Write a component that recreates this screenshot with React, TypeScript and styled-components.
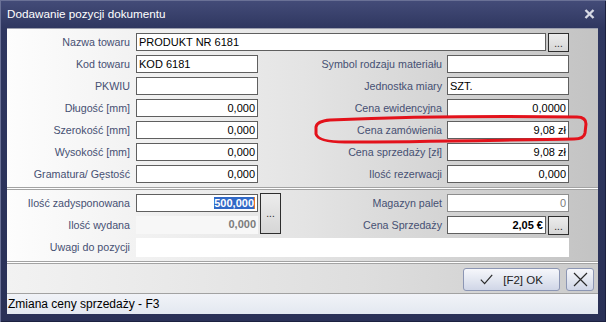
import React from "react";
import styled, { createGlobalStyle } from "styled-components";

const GlobalStyle = createGlobalStyle`
  body {
    margin: 0;
  }
  * {
    box-sizing: border-box;
  }
`;

const Window = styled.div`
  position: relative;
  width: 606px;
  height: 322px;
  display: flex;
  flex-direction: column;
  padding: 0 8px 8px 7px;
  background: linear-gradient(180deg, #444c79 0px, #2f3760 28px, #2a3157 100%);
  box-shadow: inset 1px 1px 0 #6a7196, inset -1px -1px 0 #1c2140;
  font-family: "Liberation Sans", Arial, sans-serif;
`;

const TitleBar = styled.div`
  height: 28px;
  display: flex;
  align-items: center;
  justify-content: space-between;
  padding: 0 3px 1px 0;
  color: #ffffff;
  font-size: 11.7px;
`;

const Panel = styled.div`
  flex: 1;
  display: flex;
  flex-direction: column;
  border-top: 1px solid #9c9fae;
  background: linear-gradient(90deg, #fdfdfd 0%, #e4e4e4 50%, #c3c3c3 100%);
`;

const TopGrid = styled.div`
  display: grid;
  grid-template-columns: 129px 122px 189px 122px;
  grid-auto-rows: 18px;
  row-gap: 4px;
  padding-top: 4px;
`;

const BottomGrid = styled.div`
  display: grid;
  grid-template-columns: 129px 122px 24px 165px 122px;
  grid-template-rows: 18px 18px 19px;
  row-gap: 4px;
`;

const Label = styled.div<{ $pr: number; $col?: string }>`
  grid-column: ${(p) => p.$col || "auto"};
  text-align: right;
  padding-right: ${(p) => p.$pr}px;
  color: #465073;
  font-size: 10.7px;
  line-height: 18px;
  white-space: nowrap;
`;

const Field = styled.div<{
  $right?: boolean;
  $bold?: boolean;
  $flat?: boolean;
  $muted?: boolean;
  $col?: string;
}>`
  grid-column: ${(p) => p.$col || "auto"};
  flex: 1;
  height: 100%;
  border: ${(p) => (p.$flat ? "none" : p.$muted ? "1px solid #8e8e8e" : "1px solid #5f5f5f")};
  background: ${(p) => (p.$flat && p.$muted ? "#f7f7f7" : "#ffffff")};
  color: ${(p) => (p.$muted ? "#7c7c7c" : "#000000")};
  font-size: 11px;
  font-weight: ${(p) => (p.$bold ? "bold" : "normal")};
  line-height: 16px;
  padding: 0 2px;
  text-align: ${(p) => (p.$right ? "right" : "left")};
  white-space: nowrap;
  overflow: hidden;
`;

const FieldRow = styled.div<{ $col: string }>`
  grid-column: ${(p) => p.$col};
  display: flex;
  gap: 2px;
`;

const DotsButton = styled.div<{ $tall?: boolean }>`
  width: 21px;
  height: ${(p) => (p.$tall ? "41px" : "19px")};
  margin-top: ${(p) => (p.$tall ? "-1px" : "0")};
  border: 1px solid #2e2e2e;
  background: linear-gradient(180deg, #ececec, #d6d6d6);
  display: flex;
  align-items: ${(p) => (p.$tall ? "center" : "flex-end")};
  justify-content: center;
  padding-bottom: ${(p) => (p.$tall ? "0" : "3px")};
  font-size: 10px;
  line-height: 8px;
  color: #222;
`;

const TallCell = styled.div`
  grid-column: 3;
  grid-row: 1 / 3;
  padding-left: 2px;
`;

const Selected = styled.span`
  background: #3169c6;
  color: #ffffff;
  border-right: 1px solid #e8781e;
`;

const Separator = styled.div<{ $mb: number }>`
  height: 3px;
  margin: 4px 0 ${(p) => p.$mb}px;
  border-top: 1px solid #a3a3a3;
  border-bottom: 1px solid #a3a3a3;
  background: #ffffff;
`;

const ButtonBar = styled.div`
  height: 30px;
  display: flex;
  justify-content: flex-end;
  gap: 6px;
  padding: 4px 4px 0;
  border-bottom: 1px solid #a2a2a2;
  background: linear-gradient(90deg, #f2f2f2 0%, #dedede 60%, #cbcbcb 100%);
`;

const WinButton = styled.div<{ $w: number }>`
  width: ${(p) => p.$w}px;
  height: 23px;
  display: flex;
  align-items: center;
  justify-content: center;
  gap: 10px;
  border: 1px solid #8c96b4;
  border-radius: 3px;
  background: linear-gradient(180deg, #f6f7fb 0%, #e3e7f1 50%, #d0d6e7 100%);
  color: #222;
  font-size: 11.5px;
`;

const StatusBar = styled.div`
  height: 20px;
  padding-left: 1px;
  display: flex;
  align-items: center;
  background: linear-gradient(180deg, #f1f3f8, #e3e8f0);
  color: #000;
  font-size: 12px;
`;

const Annotation = styled.svg`
  position: absolute;
  left: 0;
  top: 0;
  pointer-events: none;
`;

export default function App() {
  return (
    <>
      <GlobalStyle />
      <Window>
        <TitleBar>
          <span>Dodawanie pozycji dokumentu</span>
          <svg width="11" height="10" viewBox="0 0 11 10">
            <path d="M1.5 1 L9.5 9 M9.5 1 L1.5 9" stroke="#d6d9e4" strokeWidth="2.4" />
          </svg>
        </TitleBar>
        <Panel>
          <TopGrid>
            <Label $pr={6}>Nazwa towaru</Label>
            <FieldRow $col="2 / 5">
              <Field>PRODUKT NR 6181</Field>
              <DotsButton>...</DotsButton>
            </FieldRow>

            <Label $pr={6}>Kod towaru</Label>
            <Field>KOD 6181</Field>
            <Label $pr={5}>Symbol rodzaju materiału</Label>
            <Field />

            <Label $pr={6}>PKWIU</Label>
            <Field />
            <Label $pr={5}>Jednostka miary</Label>
            <Field>SZT.</Field>

            <Label $pr={6}>Długość [mm]</Label>
            <Field $right>0,000</Field>
            <Label $pr={5}>Cena ewidencyjna</Label>
            <Field $right>0,0000</Field>

            <Label $pr={6}>Szerokość [mm]</Label>
            <Field $right>0,000</Field>
            <Label $pr={5}>Cena zamówienia</Label>
            <Field $right>9,08 zł</Field>

            <Label $pr={6}>Wysokość [mm]</Label>
            <Field $right>0,000</Field>
            <Label $pr={5}>Cena sprzedaży [zł]</Label>
            <Field $right>9,08 zł</Field>

            <Label $pr={6}>Gramatura/ Gęstość</Label>
            <Field $right>0,000</Field>
            <Label $pr={5}>Ilość rezerwacji</Label>
            <Field $right>0,000</Field>
          </TopGrid>

          <Separator $mb={4} />

          <BottomGrid>
            <Label $pr={6}>Ilość zadysponowana</Label>
            <Field $right $bold>
              <Selected>500,000</Selected>
            </Field>
            <TallCell>
              <DotsButton $tall>...</DotsButton>
            </TallCell>
            <Label $pr={5}>Magazyn palet</Label>
            <Field $right $muted>0</Field>

            <Label $pr={6} $col="1">Ilość wydana</Label>
            <Field $right $bold $flat $muted>0,000</Field>
            <Label $pr={5} $col="4">Cena Sprzedaży</Label>
            <FieldRow $col="5">
              <Field $right $bold>2,05 €</Field>
              <DotsButton>...</DotsButton>
            </FieldRow>

            <Label $pr={6}>Uwagi do pozycji</Label>
            <Field $flat $col="2 / 6" />
          </BottomGrid>

          <Separator $mb={0} />

          <ButtonBar>
            <WinButton $w={97}>
              <svg width="13" height="11" viewBox="0 0 13 11">
                <path d="M0.8 5.6 L4.6 9.6 L12.2 0.8" fill="none" stroke="#2a2a2a" strokeWidth="1.2" />
              </svg>
              <span>[F2] OK</span>
            </WinButton>
            <WinButton $w={28}>
              <svg width="15" height="15" viewBox="0 0 15 15">
                <path d="M1 1 L14 14 M14 1 L1 14" stroke="#2a2a2a" strokeWidth="1.2" />
              </svg>
            </WinButton>
          </ButtonBar>

          <StatusBar>Zmiana ceny sprzedaży - F3</StatusBar>
        </Panel>

        <Annotation width="606" height="322" viewBox="0 0 606 322">
          <path
            d="M330 120 C 400 117, 500 116, 577 117 Q 586 117 586 124 L 585 133 Q 584 139 574 139 C 500 140, 420 142, 345 142 Q 318 142 316 134 L 316 127 Q 317 121 330 120 Z"
            fill="none"
            stroke="#e3121b"
            strokeWidth="3"
          />
        </Annotation>
      </Window>
    </>
  );
}
